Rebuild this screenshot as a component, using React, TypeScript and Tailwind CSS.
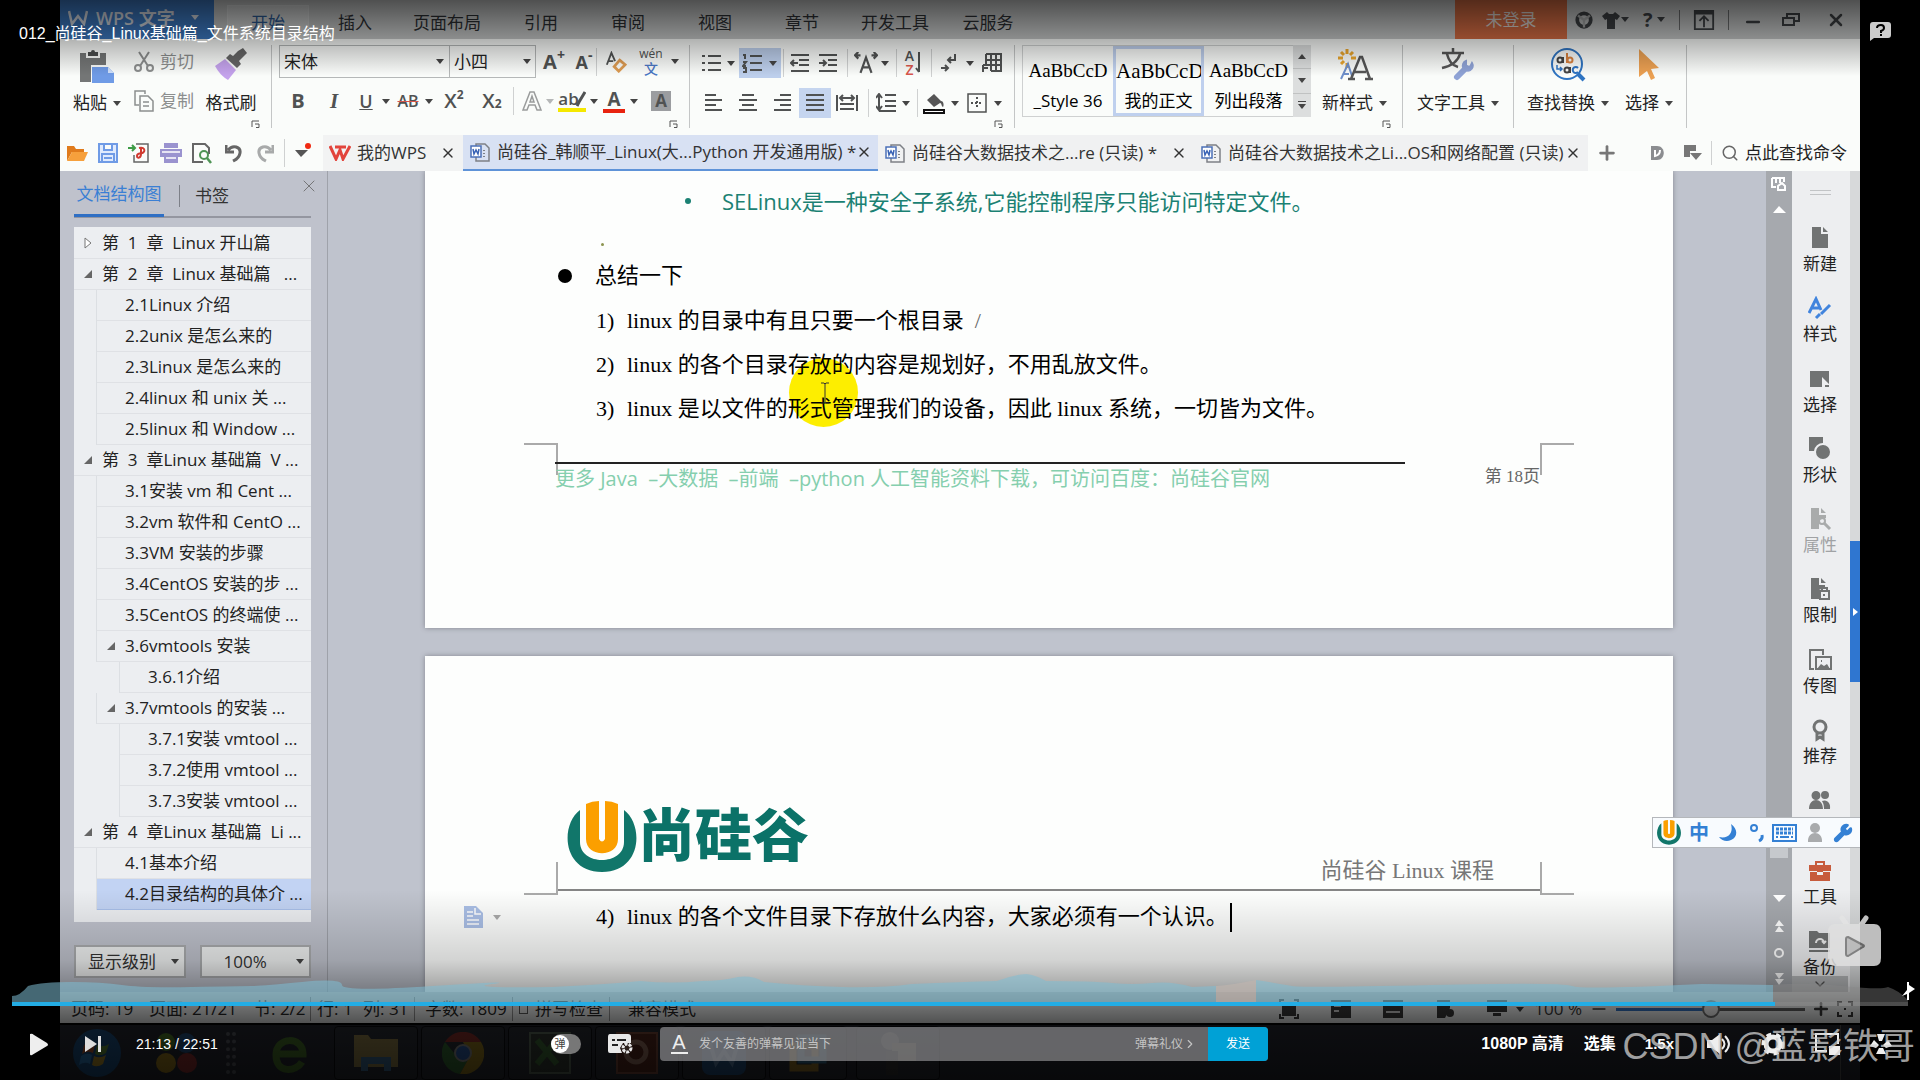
import type { ReactNode } from 'react'
import { ChevronDown, ChevronRight, Minus, Plus, Search, Wrench, X } from 'lucide-react'

const MENU = [
  { label: '插入', w: 'w-[92px]' },
  { label: '页面布局', w: 'w-[92px]' },
  { label: '引用', w: 'w-[96px]' },
  { label: '审阅', w: 'w-[78px]' },
  { label: '视图', w: 'w-[96px]' },
  { label: '章节', w: 'w-[78px]' },
  { label: '开发工具', w: 'w-[108px]' },
  { label: '云服务', w: 'w-[78px]' },
]

const OUTLINE = [
  { text: '第  1  章  Linux 开山篇', level: 1, node: 'closed' },
  { text: '第  2  章  Linux 基础篇   ...', level: 1, node: 'open' },
  { text: '2.1Linux 介绍', level: 2 },
  { text: '2.2unix 是怎么来的', level: 2 },
  { text: '2.3Linux 是怎么来的', level: 2 },
  { text: '2.4linux 和 unix 关 ...', level: 2 },
  { text: '2.5linux 和 Window ...', level: 2 },
  { text: '第  3  章Linux 基础篇  V ...', level: 1, node: 'open' },
  { text: '3.1安装 vm 和 Cent ...', level: 2 },
  { text: '3.2vm 软件和 CentO ...', level: 2 },
  { text: '3.3VM 安装的步骤', level: 2 },
  { text: '3.4CentOS 安装的步 ...', level: 2 },
  { text: '3.5CentOS 的终端使 ...', level: 2 },
  { text: '3.6vmtools 安装', level: 2, node: 'open' },
  { text: '3.6.1介绍', level: 3 },
  { text: '3.7vmtools 的安装 ...', level: 2, node: 'open' },
  { text: '3.7.1安装 vmtool ...', level: 3 },
  { text: '3.7.2使用 vmtool ...', level: 3 },
  { text: '3.7.3安装 vmtool ...', level: 3 },
  { text: '第  4  章Linux 基础篇  Li ...', level: 1, node: 'open' },
  { text: '4.1基本介绍', level: 2 },
  { text: '4.2目录结构的具体介 ...', level: 2, selected: true },
]

const LEVEL_GUIDE: Record<number, string> = { 1: 'w-0', 2: 'w-[23px] border-r', 3: 'w-[46px] border-r' }

function Caret({ className = 'text-[#444]' }: { className?: string }) {
  return (
    <svg className={`h-[5px] w-[8px] shrink-0 ${className}`} viewBox="0 0 8 5" fill="currentColor">
      <path d="M0 0h8L4 5z" />
    </svg>
  )
}

function Icon({ children, className = 'h-6 w-6', box = '0 0 24 24' }: { children: ReactNode; className?: string; box?: string }) {
  return (
    <svg className={`shrink-0 ${className}`} viewBox={box} fill="none" stroke="currentColor" strokeWidth={2}>
      {children}
    </svg>
  )
}

function Tool({ label, w, children, on = false }: { label: string; w: string; children: ReactNode; on?: boolean }) {
  return (
    <button aria-label={label} className={`flex h-[30px] shrink-0 items-center justify-center text-[#505252] ${w} ${on ? 'bg-[#c5d5ef]' : ''}`}>
      {children}
    </button>
  )
}

const Sep = ({ className = 'mx-1' }: { className?: string }) => (
  <span className={`h-[28px] w-px shrink-0 bg-[#cfd1d1] ${className}`} />
)

const GroupSep = () => <span className="mt-[6px] h-[83px] w-px shrink-0 bg-[#c4c6c6]" />

function Launcher() {
  return (
    <button aria-label="更多设置" className="absolute right-[11px] bottom-[7px]">
      <svg className="h-[8px] w-[9px] text-[#555]" viewBox="0 0 9 8" fill="none" stroke="currentColor">
        <path d="M1 7V1h7M4 4h4v3.500H5" />
      </svg>
    </button>
  )
}

function Lines({ d, className = 'h-[20px] w-[20px]' }: { d: string; className?: string }) {
  return <Icon className={className} box="0 0 20 20"><path d={d} /></Icon>
}

function TitleBar() {
  return (
    <header className="flex h-[39px] shrink-0 bg-[#c6c8c8] text-[17px] leading-[24px] text-[#2c2f33]">
      <button className="flex w-[154px] shrink-0 items-center gap-2 bg-[#3c78c0] pb-1 pl-2 text-[18px] font-semibold text-[#d5dae2]">
        <Icon className="h-[16px] w-[20px]" box="0 0 20 16"><path d="M1 1l3 13 6-8 6 8 3-13" strokeWidth={2.500} /></Icon>
        <span className="whitespace-nowrap">WPS 文字</span>
        <Caret className="ml-2 text-[#d5dae2]" />
      </button>
      <nav className="flex items-stretch pl-[13px]">
        <button className="mt-[5px] w-[82px] border border-b-0 border-[#d8dada] bg-[#d2d4d4] text-[#2b5a94]">开始</button>
        {MENU.map(m => (
          <button key={m.label} className={`shrink-0 whitespace-nowrap pt-[7px] ${m.w}`}>{m.label}</button>
        ))}
      </nav>
      <div className="ml-auto flex shrink-0 items-center text-[#3e4144]">
        <button className="h-full w-[112px] bg-[#d36b42] text-[#ded8d4]">未登录</button>
        <button aria-label="皮肤中心" className="flex w-[34px] justify-center">
          <Icon className="h-[18px] w-[18px]"><circle cx="12" cy="12" r="9" strokeWidth={5} /><path d="M4 6l8 6 8-6M12 11v11" strokeWidth={3} stroke="#a9abab" /></Icon>
        </button>
        <button aria-label="皮肤" className="flex w-[34px] items-center">
          <svg className="h-[18px] w-[20px]" viewBox="0 0 20 18" fill="currentColor"><path d="M6 1l2 2h4l2-2 5 4-3 4-2-1v10H6V8L4 9 1 5z" /></svg>
          <Caret className="text-[#3e4144]" />
        </button>
        <button aria-label="帮助" className="flex w-[38px] items-center gap-1 pl-2 text-[20px] font-bold">?<Caret className="text-[#3e4144]" /></button>
        <span className="mx-[6px] h-[20px] w-px bg-[#6d6f70]" />
        <button aria-label="功能区" className="flex w-[36px] justify-center">
          <Icon className="h-[22px] w-[24px]"><path d="M2 2h20v20H2zM12 20V9M7 13l5-5 5 5" /><path d="M2 4h20" strokeWidth={4} /></Icon>
        </button>
        <span className="mx-[6px] h-[20px] w-px bg-[#6d6f70]" />
        <button aria-label="最小化" className="flex w-[36px] justify-center pt-1"><Minus className="h-5 w-5" strokeWidth={3} /></button>
        <button aria-label="还原" className="flex w-[40px] justify-center">
          <Icon className="h-[18px] w-[18px]" box="0 0 18 18"><path d="M1 7h11v7H1zM5 6V3h12v7h-4" /></Icon>
        </button>
        <button aria-label="关闭" className="flex w-[49px] justify-center"><X className="h-5 w-5" strokeWidth={3} /></button>
      </div>
    </header>
  )
}

function BigTool({ label, className, caret = true, children }: { label: string; className: string; caret?: boolean; children: ReactNode }) {
  return (
    <button className={`mt-[9px] flex h-[67px] shrink-0 flex-col items-center justify-between whitespace-nowrap text-[#222] ${className}`}>
      {children}
      <span className="flex items-center gap-[6px]">{label}{caret && <Caret />}</span>
    </button>
  )
}

function ClipboardGroup() {
  return (
    <div className="relative flex w-[211px] shrink-0 pl-[6px]">
      <BigTool label="粘贴" className="w-[62px]">
        <svg className="h-[36px] w-[36px]" viewBox="0 0 36 36">
          <path d="M1 5h6v5h14V5h6v12H12v17H1z" fill="#747676" />
          <path d="M9 4h3a2 2 0 014 0h3v4H9z" fill="#4c4e4e" />
          <path d="M13 19h16l6 6v10H13z" fill="#6f9be6" />
          <path d="M29 19v6h6z" fill="#cfe0fb" />
        </svg>
      </BigTool>
      <div className="flex w-[70px] flex-col pt-[9px] pl-[6px] text-[#8c8e8e]">
        <button className="flex h-[28px] items-center gap-[6px] whitespace-nowrap">
          <Icon className="h-[22px] w-[20px]" box="0 0 20 22"><path d="M5 1l9 14M15 1L6 15" /><circle cx="4" cy="17" r="3" /><circle cx="16" cy="17" r="3" /></Icon>
          剪切
        </button>
        <button className="mt-[11px] flex h-[28px] items-center gap-[6px] whitespace-nowrap">
          <Icon className="h-[22px] w-[20px]" box="0 0 20 22"><path d="M5 15H1V1h10v3M6 6h8l5 5v10H6zM9 12h6M9 16h6" strokeWidth={1.500} /></Icon>
          复制
        </button>
      </div>
      <BigTool label="格式刷" className="w-[66px]" caret={false}>
        <svg className="h-[34px] w-[34px]" viewBox="0 0 34 34">
          <path d="M24 3l5-3 4 5-8 8 2 3-4 4L12 10l4-4 3 2z" fill="#666" />
          <path d="M11 11l11 11-8 10C9 29 4 24 1 18z" fill="#c4a2ec" />
        </svg>
      </BigTool>
      <Launcher />
    </div>
  )
}

function FontGroup() {
  return (
    <div className="relative flex w-[417px] shrink-0 flex-col gap-[8px] pt-[6px] pl-[7px]">
      <div className="flex h-[33px] items-center">
        <div className="relative h-[33px] w-[171px] shrink-0">
          <select aria-label="字体" className="h-full w-full appearance-none border border-[#b5b8b8] pl-1 text-[#222]"><option>宋体</option></select>
          <Caret className="pointer-events-none absolute top-[14px] right-[6px] text-[#444]" />
        </div>
        <div className="relative h-[33px] w-[86px] shrink-0">
          <select aria-label="字号" className="h-full w-full appearance-none border border-l-0 border-[#b5b8b8] pl-1 text-[#222]"><option>小四</option></select>
          <Caret className="pointer-events-none absolute top-[14px] right-[5px] text-[#444]" />
        </div>
        <Tool label="增大字号" w="w-[36px]"><span className="text-[20px] font-bold">A</span><sup className="text-[14px] font-bold">+</sup></Tool>
        <Tool label="减小字号" w="w-[24px]"><span className="text-[18px] font-bold">A</span><sup className="text-[14px] font-bold">-</sup></Tool>
        <Sep className="mx-0" />
        <Tool label="清除格式" w="w-[38px]">
          <Icon className="h-[22px] w-[22px]"><path d="M2 15L7 2l4 9M4 11h5" strokeWidth={2} /><path d="M16 10l6 5-7 7-5-5z" stroke="#dd9b52" strokeWidth={3} /></Icon>
        </Tool>
        <Tool label="拼音指南" w="w-[32px]">
          <span className="flex flex-col items-center">
            <span className="text-[12px] leading-[14px]">wén</span>
            <span className="text-[14px] leading-[15px] font-medium text-[#4a77c4]">文</span>
          </span>
        </Tool>
        <Caret className="ml-[4px] text-[#444]" />
      </div>
      <div className="flex h-[30px] items-center">
        <Tool label="加粗" w="w-[38px]"><b className="text-[20px]">B</b></Tool>
        <Tool label="倾斜" w="w-[34px]"><i className="font-['Liberation_Serif'] text-[21px] font-bold">I</i></Tool>
        <Tool label="下划线" w="w-[30px]"><u className="text-[18px] font-semibold">U</u></Tool>
        <Caret className="mx-px text-[#444]" />
        <Tool label="删除线" w="w-[34px]"><s className="text-[16px] font-semibold decoration-[#d9564c]">AB</s></Tool>
        <Caret />
        <Tool label="上标" w="w-[42px]"><span className="text-[20px] font-semibold">X</span><sup className="text-[12px] font-bold">2</sup></Tool>
        <Tool label="下标" w="w-[34px]"><span className="text-[20px] font-semibold">X</span><sub className="text-[12px] font-bold">2</sub></Tool>
        <Sep className="mr-1 ml-[4px]" />
        <Tool label="文字效果" w="w-[28px]">
          <Icon className="h-[20px] w-[20px] text-[#9a9c9c]" box="0 0 20 20"><path d="M1 19L8 1h4l7 18h-4l-2-5H7l-2 5zM8 11h4l-2-6z" strokeWidth={1.500} /></Icon>
        </Tool>
        <Caret className="text-[#b5b7b7]" />
        <Tool label="突出显示" w="w-[36px]">
          <span className="flex items-center border-b-[4px] border-[#f5e800] text-[17px] leading-[18px] font-semibold">
            ab<Icon className="-ml-[3px] h-[16px] w-[10px]" box="0 0 10 16"><path d="M9 1L3 11l-2 4" strokeWidth={3} /></Icon>
          </span>
        </Tool>
        <Caret />
        <Tool label="字体颜色" w="w-[32px]"><span className="border-b-[4px] border-[#e8230f] px-1 text-[19px] leading-[19px] font-bold">A</span></Tool>
        <Caret />
        <Tool label="字符底纹" w="w-[46px]"><span className="w-[20px] bg-[#9b9da0] text-center text-[17px] leading-[20px] font-bold">A</span></Tool>
      </div>
      <Launcher />
    </div>
  )
}

function ParagraphGroup() {
  return (
    <div className="relative flex w-[324px] shrink-0 flex-col gap-[10px] pt-[9px] pl-[7px]">
      <div className="flex h-[30px] items-center">
        <Tool label="项目符号" w="w-[28px]"><Lines d="M7 3h13M7 10h13M7 17h13M1 3h3M1 10h3M1 17h3" /></Tool>
        <Caret className="ml-[2px] text-[#444]" />
        <button aria-label="编号" className="ml-[4px] flex h-[30px] w-[42px] shrink-0 items-center gap-[7px] bg-[#bdcfec] pl-[3px] text-[#505252]">
          <Lines d="M8 3h12M8 10h12M8 17h12M1 2h2v4M1 9h3l-3 4h3M1 15h3v4H1" />
          <Caret />
        </button>
        <Sep className="mx-[2px]" />
        <Tool label="减少缩进" w="w-[28px]"><Lines d="M1 2h18M9 7h10M9 12h10M1 18h18M8 10H1M4 7l-3 3 3 3" /></Tool>
        <Tool label="增加缩进" w="w-[28px]"><Lines d="M1 2h18M10 7h9M10 12h9M1 18h18M1 10h7M5 7l3 3-3 3" /></Tool>
        <Sep className="mx-[5px]" />
        <Tool label="字符缩放" w="w-[26px]"><Lines className="h-[22px] w-[24px]" d="M5 19l5-14 5 14M7 14h6M5 3H0M3 0L0 3l3 3M15 3h5M17 0l3 3-3 3" /></Tool>
        <Caret className="mx-[2px] text-[#444]" />
        <Sep className="mr-[3px] ml-[5px]" />
        <Tool label="排序" w="w-[28px]">
          <span className="flex flex-col text-[14px] leading-[14px] font-semibold"><span>A</span><span className="text-[#d9564c]">Z</span></span>
          <Icon className="h-[22px] w-[9px]" box="0 0 9 22"><path d="M5 0v20M2 16l3 4" /></Icon>
        </Tool>
        <Sep className="mx-[3px]" />
        <Tool label="换行标记" w="w-[28px]"><Lines d="M16 1v6H9M12 4L9 7l3 3M2 15h7M6 12l3 3-3 3" /></Tool>
        <Caret className="mx-[3px] text-[#444]" />
        <Tool label="插入表格" w="w-[30px]"><Lines d="M4 1h15v17H9M4 1v10M4 7h15M4 12h15M9 1v17M14 1v17M1 12v7M1 12h6M1 15h5" /></Tool>
      </div>
      <div className="flex h-[30px] items-center">
        <Tool label="左对齐" w="w-[34px]"><Lines d="M1 2h11M1 7h17M1 12h11M1 17h17" /></Tool>
        <Tool label="居中" w="w-[34px]"><Lines d="M4 2h12M1 7h18M4 12h12M1 17h18" /></Tool>
        <Tool label="右对齐" w="w-[34px]"><Lines d="M8 2h11M2 7h17M8 12h11M2 17h17" /></Tool>
        <Tool label="两端对齐" w="w-[32px]" on><Lines d="M1 2h18M1 7h18M1 12h18M1 17h18" /></Tool>
        <Tool label="分散对齐" w="w-[32px]"><Lines className="h-[20px] w-[22px]" d="M0 2v16M20 2v16M3 5h14M6 2L3 5l3 3M14 2l3 3-3 3M3 11h14M3 16h14" /></Tool>
        <Sep className="mx-[5px]" />
        <Tool label="行距" w="w-[24px]"><Lines d="M9 2h11M9 8h11M9 13h11M3 18h17M3 1v16M0 5l3-4 3 4M0 13l3 4 3-4" /></Tool>
        <Caret className="mx-[4px] text-[#444]" />
        <Sep className="mx-[3px]" />
        <Tool label="底纹" w="w-[26px]">
          <svg className="h-[22px] w-[22px]" viewBox="0 0 22 22"><path d="M4 8l7-6 7 7c3 0 3 5 2 6-2-1-1-4-3-4l-6 4z" fill="#555" /><path d="M1 18h20v3H1z" fill="#fff" stroke="#111" strokeWidth="2" /></svg>
        </Tool>
        <Caret className="mx-[4px] text-[#444]" />
        <Tool label="边框" w="w-[28px]">
          <Icon className="h-[20px] w-[20px]" box="0 0 20 20"><path d="M1 1h18v18H1z" strokeWidth={1.500} /><path d="M10 4v12M4 10h12" strokeDasharray="2 2" /></Icon>
        </Tool>
        <Caret className="ml-[3px] text-[#444]" />
      </div>
      <Launcher />
    </div>
  )
}

function StyleGroup() {
  return (
    <div className="relative flex w-[387px] shrink-0 pt-[6px] pl-[7px]">
      <div className="flex h-[72px] w-[271px] shrink-0 border border-r-0 border-[#cfd1d1] text-[17px]">
        <button className="flex w-[90px] shrink-0 flex-col items-center justify-end overflow-hidden whitespace-nowrap pb-[3px]">
          <span className="font-['Liberation_Serif'] text-[19px] leading-[24px] text-black">AaBbCcD</span>
          <span className="mt-[6px] leading-[24px]">_Style 36</span>
        </button>
        <button className="flex w-[91px] shrink-0 flex-col items-center justify-end overflow-hidden border-[3px] border-[#bfd0ee] whitespace-nowrap">
          <span className="w-full overflow-hidden text-left font-['Liberation_Serif'] text-[21px] leading-[24px] text-black">AaBbCcD</span>
          <span className="mt-[6px] leading-[24px]">我的正文</span>
        </button>
        <button className="flex w-[89px] shrink-0 flex-col items-center justify-end overflow-hidden whitespace-nowrap pb-[3px]">
          <span className="font-['Liberation_Serif'] text-[19px] leading-[24px] text-black">AaBbCcD</span>
          <span className="mt-[6px] leading-[24px]">列出段落</span>
        </button>
      </div>
      <div className="flex h-[72px] w-[18px] shrink-0 flex-col divide-y divide-[#c0c2c2] bg-[#dcdede]">
        <button aria-label="向上" className="flex flex-1 items-center justify-center"><Caret className="rotate-180 text-[#444]" /></button>
        <button aria-label="向下" className="flex flex-1 items-center justify-center"><Caret /></button>
        <button aria-label="更多样式" className="flex flex-1 flex-col items-center justify-center gap-[2px]"><span className="h-px w-2 bg-[#444]" /><Caret /></button>
      </div>
      <button className="mt-[3px] ml-[11px] flex h-[67px] flex-col items-center justify-between whitespace-nowrap text-[#222]">
        <svg className="h-[34px] w-[36px]" viewBox="0 0 36 34" fill="none">
          <path d="M10 1v5M10 15v5M1 10h5M14 10h5M4 4l3 3M16 4l-3 3M4 16l3-3" stroke="#eaa52c" strokeWidth="3" />
          <path d="M4 31l7-15 4 12M6 26h6" stroke="#6e8fca" strokeWidth="2" />
          <path d="M14 31l9-22h2l8 22M17 24h12M11 31h7M28 31h8" stroke="#555" strokeWidth="2.500" />
        </svg>
        <span className="flex items-center gap-[6px]">新样式<Caret /></span>
      </button>
      <Launcher />
    </div>
  )
}

function Ribbon() {
  return (
    <section className="flex h-[96px] shrink-0 bg-[#fafcfa] text-[17px] leading-[24px]">
      <ClipboardGroup />
      <GroupSep />
      <FontGroup />
      <GroupSep />
      <ParagraphGroup />
      <GroupSep />
      <StyleGroup />
      <GroupSep />
      <BigTool label="文字工具" className="w-[110px]">
        <svg className="h-[34px] w-[34px]" viewBox="0 0 34 34" fill="none">
          <path d="M1 5h22M12 0v5M6 6c2 8 7 12 11 13M19 6C17 13 10 18 1 20" stroke="#555" strokeWidth="2.500" />
          <path d="M16 29l9-9" stroke="#8fa3d6" strokeWidth="6" strokeLinecap="round" />
          <path d="M31 15a5 5 0 11-6-2v5l4 1z" fill="#8fa3d6" stroke="#8fa3d6" strokeWidth="2" />
        </svg>
      </BigTool>
      <GroupSep />
      <BigTool label="查找替换" className="w-[108px]">
        <svg className="h-[34px] w-[36px]" viewBox="0 0 36 34" fill="none">
          <circle cx="17" cy="16" r="15" stroke="#2f74c2" strokeWidth="2" />
          <path d="M28 26l6 6" stroke="#2f74c2" strokeWidth="4" />
          <circle cx="10" cy="12" r="2.500" stroke="#444" strokeWidth="2" /><path d="M13 9v6" stroke="#444" strokeWidth="2" />
          <path d="M17 5v10" stroke="#d9823f" strokeWidth="2" /><circle cx="20" cy="12" r="2.500" stroke="#d9823f" strokeWidth="2" />
          <circle cx="17" cy="22" r="2.500" stroke="#444" strokeWidth="2" /><path d="M20 19v6" stroke="#444" strokeWidth="2" />
          <path d="M28 20a3 3 0 100 4" stroke="#2f74c2" strokeWidth="2" />
          <path d="M7 17v4h5M10 19l2 2-2 2" stroke="#2f74c2" strokeWidth="1.500" />
        </svg>
      </BigTool>
      <BigTool label="选择" className="w-[54px]">
        <svg className="h-[32px] w-[22px]" viewBox="0 0 22 32" fill="#eba052"><path d="M1 1l20 19-8 1 4 9-4 2-4-9-8 6z" /></svg>
      </BigTool>
      <span className="w-[10px]" />
      <GroupSep />
    </section>
  )
}

function DocIcon() {
  return (
    <svg className="h-[20px] w-[20px] shrink-0" viewBox="0 0 20 20" fill="none">
      <path d="M6 2h9l4 4v13H6z" stroke="#7d8086" strokeWidth="1.500" />
      <path d="M14 8v9" stroke="#7d8086" strokeDasharray="1 2" strokeWidth="2" />
      <path d="M1 4h10v11H1z" fill="#fff" stroke="#4b70b8" strokeWidth="1.500" />
      <path d="M3 7l1 5 2-4 2 4 1-5" stroke="#3963b5" strokeWidth="1.500" />
    </svg>
  )
}

function CloseTab() {
  return <button aria-label="关闭" className="mr-[7px] text-[#333]"><X className="h-4 w-4" strokeWidth={2} /></button>
}

function TabBar() {
  return (
    <div className="flex h-[36px] shrink-0 bg-[#fafcfa] text-[17px] leading-[24px] text-[#333]">
      <div className="flex w-[263px] shrink-0 items-center gap-[10px] pl-[6px]">
        <button aria-label="打开"><svg className="h-[18px] w-[22px]" viewBox="0 0 22 18"><path d="M1 17V2h7l2 3h8v3H6z" fill="#e07b1c" /><path d="M6 8h16l-4 9H1z" fill="#f6a03c" /></svg></button>
        <button aria-label="保存"><svg className="h-[20px] w-[20px]" viewBox="0 0 20 20" fill="#dfeafd" stroke="#6f9be6" strokeWidth="2"><path d="M1 1h18v18H1zM6 1v6h8V1M4 19v-8h12v8M6 15h8" /></svg></button>
        <button aria-label="输出PDF"><svg className="h-[20px] w-[22px]" viewBox="0 0 22 20" fill="none" strokeWidth="1.500"><path d="M8 1h12v18H6v-7" stroke="#666" /><path d="M0 5h7M4 2l3 3-3 3" stroke="#3e9c46" strokeWidth="2" /><path d="M11 5c7-2 7 6 1 5M13 5v6c0 4-4 5-4 2s3-2 4-3" stroke="#d13a30" strokeWidth="2" /></svg></button>
        <button aria-label="打印"><svg className="h-[20px] w-[22px]" viewBox="0 0 22 20" fill="#9a93cf"><path d="M4 0h14v5H4zM0 6h22v8H0zM4 12h14v8H4z" /><path d="M2 9h18M6 15h10" stroke="#fff" strokeWidth="1.500" /></svg></button>
        <button aria-label="打印预览"><svg className="h-[21px] w-[20px]" viewBox="0 0 20 21" fill="none" strokeWidth="1.500"><path d="M11 19H1V1h12l4 4v6" stroke="#666" strokeWidth="2" /><circle cx="12" cy="12" r="4" stroke="#4f9455" strokeWidth="2" /><path d="M15 15l4 5" stroke="#4f9455" strokeWidth="2.500" /></svg></button>
        <button aria-label="撤销" className="ml-[3px]"><Icon className="h-[20px] w-[18px] text-[#666]" box="0 0 18 20"><path d="M3 7c5-6 13-3 12 3s-5 7-7 8M1 2v7h8" strokeWidth={3} /></Icon></button>
        <button aria-label="恢复" className="ml-[3px]"><Icon className="h-[20px] w-[18px] text-[#a8aaaa]" box="0 0 18 20"><path d="M15 7C10 1 2 4 3 10s5 7 7 8M17 2v7H9" strokeWidth={3} /></Icon></button>
        <span className="h-[28px] w-px bg-[#cfd1d1]" />
        <button aria-label="自定义" className="relative flex h-5 w-4 items-center">
          <svg className="h-[7px] w-[13px] text-[#555]" viewBox="0 0 13 7" fill="currentColor"><path d="M0 0h13L6 7z" /></svg>
          <span className="absolute top-0 right-0 h-[6px] w-[6px] rounded-full bg-[#f02a12]" />
        </button>
      </div>
      <div className="flex w-[140px] shrink-0 items-center bg-[#f2f3f3] pl-[6px]">
        <svg className="h-[16px] w-[22px]" viewBox="0 0 22 16" fill="none" stroke="#e2443c" strokeWidth="3"><path d="M1 1l6 13 4-9 3 9L21 1M6 2h11" /></svg>
        <a href="#wps" className="ml-[6px] flex-1">我的WPS</a>
        <CloseTab />
      </div>
      <div className="flex w-[415px] shrink-0 items-center border-b-2 border-[#5f93d8] bg-[#d8e1f3] pl-[7px]">
        <DocIcon />
        <a href="#linux" className="ml-[7px] flex-1 whitespace-nowrap">尚硅谷_韩顺平_Linux(大...Python 开发通用版) *</a>
        <CloseTab />
      </div>
      <div className="flex w-[316px] shrink-0 items-center bg-[#f0f1f2] pl-[7px]">
        <DocIcon />
        <a href="#bigdata" className="ml-[7px] flex-1 whitespace-nowrap">尚硅谷大数据技术之...re (只读) *</a>
        <CloseTab />
      </div>
      <div className="flex w-[394px] shrink-0 items-center bg-[#f0f1f2] pl-[7px]">
        <DocIcon />
        <a href="#network" className="ml-[7px] flex-1 whitespace-nowrap">尚硅谷大数据技术之Li...OS和网络配置 (只读)</a>
        <CloseTab />
      </div>
      <button aria-label="新建标签" className="ml-[8px] text-[#777]"><Plus className="h-[22px] w-[22px]" strokeWidth={3} /></button>
      <div className="ml-auto flex shrink-0 items-center pr-[11px]">
        <svg className="h-[14px] w-[14px]" viewBox="0 0 14 14"><path d="M1 0h6c9 0 9 14 0 14H1z" fill="#8b8d90" /><path d="M5 4v6q5-1 5-6" stroke="#fff" strokeWidth="2" fill="none" /></svg>
        <svg className="ml-[20px] h-[16px] w-[18px]" viewBox="0 0 18 16" fill="#777"><path d="M0 0h12v6H6v6H0zM6 8h12l-6 7z" /></svg>
        <span className="mx-[9px] h-[24px] w-px bg-[#cfd1d1]" />
        <label className="flex items-center gap-[6px]">
          <Search className="h-[18px] w-[18px] text-[#666]" />
          <input aria-label="查找命令" placeholder="点此查找命令" className="w-[104px] bg-transparent outline-none placeholder:text-[#222] placeholder:opacity-100" />
        </label>
      </div>
    </div>
  )
}

function OutlinePanel() {
  return (
    <aside className="flex w-[268px] shrink-0 flex-col border-r border-[#9fa2aa] pr-[16px] pl-[14px] text-[17px] leading-[24px]">
      <div className="relative flex h-[47px] shrink-0 items-center border-b-2 border-[#9496a0] pt-[4px] text-[#333]">
        <button className="h-[43px] w-[90px] shrink-0 border-b-[3px] border-[#2f6fc4] text-[#3a7fd4]">文档结构图</button>
        <span className="mx-[15px] h-[22px] w-px bg-[#7d8088]" />
        <button>书签</button>
        <button aria-label="关闭面板" className="absolute top-[5px] right-[-8px]"><X className="h-[20px] w-[20px] text-[#666]" strokeWidth={1} /></button>
      </div>
      <ul className="mt-[9px] flex min-h-0 flex-1 flex-col overflow-hidden bg-[#eceef1] pt-px text-[#222]">
        {OUTLINE.map(item => (
          <li key={item.text} className="flex h-[31px] shrink-0">
            <span className={`shrink-0 border-[#dcdfe3] ${LEVEL_GUIDE[item.level]}`} />
            <a href="#outline" className={`flex min-w-0 flex-1 items-center whitespace-pre border-b ${item.selected ? 'border-[#a9c0ea] bg-[#c2d3f3]' : 'border-[#dfe1e5]'}`}>
              <span className="flex w-[28px] shrink-0 justify-center">
                {item.node === 'open' && <svg className="h-[8px] w-[8px]" viewBox="0 0 8 8" fill="#666"><path d="M8 0v8H0z" /></svg>}
                {item.node === 'closed' && <svg className="h-[12px] w-[8px]" viewBox="0 0 8 12" fill="#fff" stroke="#777"><path d="M1 1l6 5-6 5z" /></svg>}
              </span>
              {item.text}
            </a>
          </li>
        ))}
      </ul>
      <div className="flex h-[70px] shrink-0 gap-[14px] pt-[23px]">
        <div className="relative h-[33px] flex-1">
          <select aria-label="显示级别" className="h-full w-full appearance-none border-2 border-[#a9abad] bg-[#eef0f0] pl-[12px] text-[#333]"><option>显示级别</option></select>
          <Caret className="pointer-events-none absolute top-[14px] right-[7px] text-[#444]" />
        </div>
        <div className="relative h-[33px] flex-1">
          <select aria-label="缩放" className="h-full w-full appearance-none border-2 border-[#a9abad] bg-[#eef0f0] pl-[22px] text-[#333]"><option>100%</option></select>
          <Caret className="pointer-events-none absolute top-[14px] right-[7px] text-[#444]" />
        </div>
      </div>
    </aside>
  )
}

function Item({ n, children }: { n: number; children: ReactNode }) {
  return (
    <p className="flex h-[44px] items-center whitespace-nowrap">
      <span className="w-[31px]">{n})</span>
      <span>{children}</span>
    </p>
  )
}

function AtguiguMark({ className }: { className: string }) {
  return (
    <svg className={className} viewBox="0 0 72 72">
      <path d="M14 9C-6 24-4 71 36 71s42-47 22-62v32c0 24-44 24-44 0z" fill="#11766a" />
      <path d="M20 3q6-3 13-3v38q3 5 6 0V0q7 0 13 3v35c0 19-32 19-32 0z" fill="#fb9f00" />
    </svg>
  )
}

function Document() {
  return (
    <main className="flex min-w-0 flex-1 flex-col overflow-hidden bg-[#bfc3cd] pr-[93px] pl-[97px]">
      <article className="relative isolate shrink-0 bg-[#fdfefd] pb-[137px] font-['Liberation_Serif','Noto_Sans_CJK_SC',serif] text-[22px] leading-[24px] text-black shadow-[0_0_5px_#84868e]">
        <span className="absolute top-[187px] left-[364px] -z-10 h-[69px] w-[69px] rounded-full bg-[#fdee00]" />
        <svg className="absolute top-[211px] left-[394px] h-[22px] w-[12px]" viewBox="0 0 12 22" fill="none" stroke="#333"><path d="M2 1h3l1 1 1-1h3M6 2v18M2 21h3l1-1 1 1h3" /></svg>
        <p className="flex h-[53px] items-center pt-[6px] pl-[260px] font-['Open_Sans','Noto_Sans_CJK_SC',sans-serif] whitespace-nowrap text-[#1b8173]">
          <span className="mr-[31px] h-[6px] w-[6px] rounded-full bg-[#1b8173]" />
          SELinux是一种安全子系统,它能控制程序只能访问特定文件。
        </p>
        <div className="flex h-[40px] items-center pl-[176px]"><span className="h-[3px] w-[3px] rounded-full bg-[#8c9450]" /></div>
        <div className="pl-[171px]">
          <p className="-ml-[38px] flex h-[24px] items-center">
            <span className="mr-[23px] h-[14px] w-[14px] rounded-full bg-black" />总结一下
          </p>
          <div className="mt-[11px]">
            <Item n={1}>linux 的目录中有且只要一个根目录 <span className="text-[#666]">&nbsp;/</span></Item>
            <Item n={2}>linux 的各个目录存放的内容是规划好，不用乱放文件。</Item>
            <Item n={3}>linux 是以文件的形式管理我们的设备，因此 linux 系统，一切皆为文件。</Item>
          </div>
        </div>
        <footer className="mt-[12px] flex items-start px-[99px]">
          <span className="h-[32px] w-[34px] shrink-0 border-t-2 border-r-2 border-[#aaa]" />
          <div className="flex min-w-0 flex-1 justify-between pt-[19px]">
            <p className="-ml-[3px] w-[850px] border-t-2 border-[#222] pt-[2px] font-['Open_Sans','Noto_Sans_CJK_SC',sans-serif] text-[20px] leading-[25px] whitespace-pre text-[#85cfae]">
              更多 Java  –大数据  –前端  –python 人工智能资料下载，可访问百度：尚硅谷官网
            </p>
            <p className="pt-[2px] text-[17px] leading-[25px] whitespace-nowrap text-[#666]">第 18页</p>
          </div>
          <span className="h-[32px] w-[34px] shrink-0 border-t-2 border-l-2 border-[#aaa]" />
        </footer>
      </article>

      <article className="mt-[28px] min-h-0 flex-1 bg-[#fdfefd] pt-[145px] font-['Liberation_Serif','Noto_Sans_CJK_SC',serif] text-[22px] leading-[24px] text-black shadow-[0_0_5px_#84868e]">
        <header className="flex h-[94px] items-end px-[99px]">
          <span className="h-[33px] w-[34px] shrink-0 border-r-2 border-b-2 border-[#aaa]" />
          <div className="mb-[4px] flex h-[90px] flex-1 justify-between border-b-2 border-[#858585] pr-[46px] pl-[8px]">
            <div className="flex h-[72px] items-center">
              <AtguiguMark className="h-[72px] w-[72px]" />
              <span className="text-[57px] leading-[60px] font-black text-[#0b7268]">尚硅谷</span>
            </div>
            <p className="mt-auto pb-[6px] text-[#777]">尚硅谷 Linux 课程</p>
          </div>
          <span className="h-[33px] w-[34px] shrink-0 border-b-2 border-l-2 border-[#aaa]" />
        </header>
        <div className="flex items-center">
          <button aria-label="段落布局" className="flex w-[171px] items-center gap-[10px] pl-[39px]">
            <svg className="h-[22px] w-[19px]" viewBox="0 0 19 22"><path d="M0 0h12l7 7v15H0z" fill="#aabfe6" /><path d="M3 6h6M3 10h6M3 14h12M3 18h12M11 2v6h6" stroke="#fff" strokeWidth="1.500" fill="none" /></svg>
            <Caret className="text-[#aaa]" />
          </button>
          <Item n={4}>linux 的各个文件目录下存放什么内容，大家必须有一个认识。</Item>
          <span className="ml-[2px] h-[29px] w-[2px] bg-black" />
        </div>
      </article>
    </main>
  )
}

function ScrollRail() {
  return (
    <div className="flex w-[26px] shrink-0 flex-col items-center bg-[#a6a9ae] pt-[6px] pb-[7px] text-white">
      <Icon className="h-[15px] w-[16px]" box="0 0 16 15"><path d="M1 1h12v4M1 1v9h4M5 2v4M9 2v4M7 13V9l4-3 3 3v4z" /></Icon>
      <svg className="mt-[14px] h-[7px] w-[13px]" viewBox="0 0 13 7" fill="currentColor"><path d="M6 0l7 7H0z" /></svg>
      <span className="mt-auto h-[40px] w-[18px] bg-[#c6c9cd]" />
      <svg className="mt-[37px] h-[7px] w-[13px]" viewBox="0 0 13 7" fill="currentColor"><path d="M0 0h13L6 7z" /></svg>
      <svg className="mt-[18px] h-[12px] w-[11px]" viewBox="0 0 11 12" fill="currentColor"><path d="M5 0l5 6H1zM5 6l5 6H1z" /></svg>
      <span className="mt-[16px] h-[10px] w-[10px] rounded-full border-2 border-white" />
      <svg className="mt-[15px] h-[12px] w-[11px]" viewBox="0 0 11 12" fill="currentColor"><path d="M1 0h9L5 6zM1 6h9l-5 6z" /></svg>
    </div>
  )
}

const SIDE_TOOLS = [
  { label: '新建', color: 'text-[#717373]', icon: <path d="M4 1h9v7h7v14H4zM15 1l5 5h-5z" fill="currentColor" stroke="none" /> },
  { label: '样式', color: 'text-[#4184dd]', icon: <path d="M1 17L8 3l5 11M4 12h7M22 9l-9 9M12 18l-4 4" strokeWidth={3} /> },
  { label: '选择', color: 'text-[#717373]', icon: <path d="M2 4h19v13l-7-7v10H2zM17 18h4v2h-4z" fill="currentColor" stroke="none" /> },
  { label: '形状', color: 'text-[#717373]', icon: <path d="M1 0h14v6a9 9 0 00-9 8H1zM15 8a7 7 0 110 14 7 7 0 010-14z" fill="currentColor" stroke="none" /> },
  { label: '属性', color: 'text-[#a9abab]', disabled: true, icon: <><path d="M3 1h8v7h7v3l-7 2v9H3zM13 1l5 5h-5z" fill="currentColor" stroke="none" /><circle cx="14" cy="14" r="3" /><path d="M16 16l6 6" strokeWidth={3} /></> },
  { label: '限制', color: 'text-[#717373]', icon: <><path d="M3 1h8v7h6v2l-6 3v9H3zM13 1l5 5h-5z" fill="currentColor" stroke="none" /><path d="M12 14h9v8h-9zM14 14v-3h5v3M16 17v2" /></> },
  { label: '传图', color: 'text-[#717373]', icon: <><path d="M2 21V2h13v5M2 18v3h4" /><path d="M8 9h15v12H8zM13 13h1" /><path d="M9 21l4-5 3 2 3-2 3 5z" fill="currentColor" stroke="none" /></> },
  { label: '推荐', color: 'text-[#717373]', icon: <path d="M12 3a6 6 0 110 12 6 6 0 010-12zM9 14v7l3-2 3 2v-7" strokeWidth={3} /> },
  { label: '分享', color: 'text-[#717373]', icon: <path d="M8 3a4 4 0 110 9 4 4 0 010-9zM17 3a4 4 0 110 8 4 4 0 010-8zM1 21c0-12 14-12 14 0zM16 21c0-5-1-6-2-8 5-2 9 2 8 8z" fill="currentColor" stroke="none" /> },
  { label: '工具', color: 'text-[#c75b3c]', icon: <><path d="M1 6h22v6H1zM2 13h7v3h6v-3h7v9H2z" fill="currentColor" stroke="none" /><path d="M8 6V3h8v3M9 12h6" /></> },
  { label: '备份', color: 'text-[#717373]', icon: <><path d="M1 2h8l2 2h11v15H1z" fill="currentColor" stroke="none" /><path d="M8 14a4 4 0 118 0M14 12l2 2 2-2" stroke="#eee" /><path d="M1 22h21" /></> },
]

function TaskPane() {
  return (
    <aside className="flex w-[68px] shrink-0 bg-[#d7d9da]">
      <div className="flex w-[58px] flex-col items-center bg-[#edeef0] pr-[2px]">
        <span className="mt-[19px] h-[5px] w-[21px] shrink-0 border-y border-[#c2c4c6]" />
        <div className="mt-[31px] flex min-h-0 flex-1 flex-col justify-between">
          {SIDE_TOOLS.map(t => (
            <button
              key={t.label}
              disabled={t.disabled}
              className={`flex h-[50px] flex-col items-center justify-between text-[17px] leading-[24px] ${t.disabled ? 'text-[#a0a2a4]' : 'text-[#222]'}`}
            >
              <Icon className={`h-[24px] w-[24px] ${t.color}`}>{t.icon}</Icon>
              {t.label}
            </button>
          ))}
        </div>
        <button aria-label="更多" className="-mt-[3px] flex h-[16px] w-full shrink-0 items-center justify-center bg-[#b9bbbd]"><ChevronDown className="h-4 w-4 text-[#555]" /></button>
      </div>
      <button aria-label="收起" className="mt-[370px] flex h-[141px] w-[10px] items-center justify-center bg-[#2f76d0]">
        <svg className="h-[8px] w-[5px]" viewBox="0 0 5 8" fill="#fff"><path d="M0 0l5 4-5 4z" /></svg>
      </button>
    </aside>
  )
}

function StatusBar() {
  return (
    <div className="flex h-[31px] shrink-0 items-center overflow-hidden bg-[#d9dbdb] pt-[3px] pl-[11px] text-[17px] leading-[24px] whitespace-nowrap text-[#222]">
      <span className="w-[78px]">页码: 19</span>
      <span className="w-[105px]">页面: 21/21</span>
      <span className="w-[57px] border-r border-[#888]">节: 2/2</span>
      <span className="ml-[6px] w-[46px]">行: 1</span>
      <span className="w-[52px] border-r border-[#888]">列: 31</span>
      <span className="ml-[10px] w-[88px] border-r border-[#888]">字数: 1809</span>
      <label className="ml-[6px] flex items-center gap-[7px] border-r border-[#888] pr-[6px]">
        <input type="checkbox" className="h-[9px] w-[9px] appearance-none border border-[#555]" />拼写检查
      </label>
      <span className="ml-[18px]">兼容模式</span>
      <div className="ml-auto flex items-center gap-[32px] pr-[7px] text-[#333]">
        <Icon className="h-[20px] w-[20px]" box="0 0 20 20"><path d="M1 5V1h4M15 1h4v4M19 15v4h-4M5 19H1v-4" /><path d="M4 4h12v12H4z" fill="currentColor" /></Icon>
        <svg className="h-[18px] w-[20px]" viewBox="0 0 20 18" fill="currentColor"><path d="M0 0h20v18H0z" /><path d="M3 6h7M3 11h5" stroke="#bbb" strokeWidth="2" /></svg>
        <svg className="h-[18px] w-[20px]" viewBox="0 0 20 18" fill="currentColor"><path d="M0 0h20v18H0z" /><path d="M3 5h14M3 12h14" stroke="#bbb" strokeWidth="2" /></svg>
        <svg className="h-[18px] w-[20px]" viewBox="0 0 20 18" fill="currentColor"><path d="M2 0h13v8l-5 10H2z" /><circle cx="15" cy="13" r="4" /></svg>
        <div className="flex items-center">
          <svg className="h-[18px] w-[20px]" viewBox="0 0 20 18" fill="currentColor"><path d="M0 0h20v12H0zM6 13h8v3H6z" /></svg>
          <Caret className="ml-[9px] text-[#333]" />
          <span className="ml-[10px]">100 %</span>
          <Minus className="mx-[7px] h-5 w-5" />
          <input
            type="range"
            aria-label="显示比例"
            defaultValue={50}
            className="h-[3px] w-[189px] appearance-none bg-[linear-gradient(to_right,#2d66ad_50%,#555_50%)] [&::-webkit-slider-thumb]:h-[18px] [&::-webkit-slider-thumb]:w-[18px] [&::-webkit-slider-thumb]:appearance-none [&::-webkit-slider-thumb]:rounded-full [&::-webkit-slider-thumb]:border-2 [&::-webkit-slider-thumb]:border-[#666] [&::-webkit-slider-thumb]:bg-[#ddd]"
          />
          <Plus className="mx-[6px] h-5 w-5" strokeWidth={3} />
          <Icon className="h-[16px] w-[16px]" box="0 0 16 16"><path d="M1 5V1h4M11 1h4v4M15 11v4h-4M5 15H1v-4M7 8h2" /></Icon>
        </div>
      </div>
    </div>
  )
}

function TaskButton({ className = 'w-[84px]', children }: { className?: string; children: ReactNode }) {
  return <button className={`flex h-[54px] shrink-0 items-center justify-center rounded-sm border border-[#0c0d10] bg-[#2b2e36] ${className}`}>{children}</button>
}

function Taskbar() {
  return (
    <div className="flex h-[57px] shrink-0 items-center gap-[3px] border-t-2 border-black bg-[#262931] pl-[12px] opacity-90">
      <svg className="h-[50px] w-[50px]" viewBox="0 0 50 50">
        <circle cx="25" cy="25" r="24" fill="#1c4f80" />
        <path d="M12 17q6-4 11-1l-2 9q-6-3-11 1z" fill="#b0562d" /><path d="M25 17q6 3 12-1l-3 9q-6 4-11 1z" fill="#5f8a36" />
        <path d="M9 28q6-4 11-1l-2 9q-5-3-11 1z" fill="#2d7ab8" /><path d="M22 28q6 3 12-1l-3 9q-6 4-11 1z" fill="#b08e2a" />
      </svg>
      <svg className="ml-[30px] h-[42px] w-[44px]" viewBox="0 0 44 42"><circle cx="11" cy="10" r="9" fill="#4f7a28" /><circle cx="31" cy="11" r="10" fill="#24507f" /><circle cx="11" cy="31" r="10" fill="#9a7a1e" /><circle cx="32" cy="31" r="10" fill="#8c3030" /></svg>
      <span className="ml-[24px] h-[42px] w-[10px] border-x-4 border-dotted border-[#555860]" />
      <svg className="mr-[22px] ml-[30px] h-[42px] w-[40px]" viewBox="0 0 40 42" fill="none" stroke="#46702a" strokeWidth="7"><path d="M7 22h27c0-18-27-18-27 1s20 17 26 7" /></svg>
      <TaskButton><svg className="h-[40px] w-[46px]" viewBox="0 0 46 40"><path d="M1 2h14l3 4h27v28H1z" fill="#8f7f4a" /><path d="M8 38V24h30v14h-7v-7H15v7z" fill="#3c6a90" /></svg></TaskButton>
      <TaskButton><svg className="h-[42px] w-[42px]" viewBox="0 0 42 42"><path d="M3 10A21 21 0 0139 10H21z" fill="#8c302c" /><path d="M3 10a21 21 0 0015 32l9-16-15-5z" fill="#356b35" /><path d="M39 10a21 21 0 01-21 32l10-18-7-14z" fill="#94791f" /><circle cx="21" cy="21" r="8" fill="#2d5aa0" stroke="#888" strokeWidth="2" /></svg></TaskButton>
      <TaskButton><svg className="h-[42px] w-[42px]" viewBox="0 0 42 42"><path d="M1 1h40v40H1z" fill="#333b33" stroke="#5b6b5b" strokeWidth="2" /><path d="M8 8l20 24M28 8L8 32" stroke="#3d6b38" strokeWidth="6" /></svg></TaskButton>
      <TaskButton><svg className="h-[42px] w-[42px]" viewBox="0 0 42 42"><path d="M1 1h40v40H1z" fill="#55281d" stroke="#7a4a3a" strokeWidth="2" /><circle cx="20" cy="20" r="10" fill="none" stroke="#967060" strokeWidth="5" /></svg></TaskButton>
      <TaskButton><svg className="h-[44px] w-[44px]" viewBox="0 0 44 44"><rect width="44" height="44" rx="8" fill="#24507f" /><path d="M8 12l6 20 8-12 8 12 6-20" fill="none" stroke="#5a80a8" strokeWidth="4" /></svg></TaskButton>
      <TaskButton className="w-[78px]"><svg className="h-[42px] w-[42px]" viewBox="0 0 42 42" fill="none" strokeWidth="7"><path d="M6 14h22v22H6z" stroke="#94742a" /><path d="M14 6h22v22H14z" stroke="#356a88" /></svg></TaskButton>
      <TaskButton className="ml-[6px] w-[84px]"><svg className="h-[44px] w-[40px]" viewBox="0 0 40 44"><circle cx="12" cy="10" r="9" fill="#6b6b68" /><path d="M14 12h24v18H14z" fill="#807a62" /><path d="M8 20h12v24H8z" fill="#333" /></svg></TaskButton>
      <span className="ml-auto h-full w-[20px] border-l border-[#555]" />
    </div>
  )
}

function ImeBar() {
  return (
    <div className="absolute top-[817px] right-[60px] flex h-[31px] w-[208px] items-center border border-r-0 border-[#b4b7bb] bg-[#f8fbfe] pl-[3px] text-[#3480d4]">
      <AtguiguMark className="h-[25px] w-[26px]" />
      <span className="ml-[7px] text-[20px] leading-[24px] font-bold">中</span>
      <svg className="ml-[10px] h-[18px] w-[18px]" viewBox="0 0 18 18" fill="currentColor"><path d="M12 0c7 5 7 13 0 16-4 2-9 1-12-3 5 1 9 0 11-3 2-3 2-6 1-10z" /></svg>
      <Icon className="ml-[12px] h-[20px] w-[16px]" box="0 0 16 20"><circle cx="5" cy="5" r="3" /><path d="M13 12q1 4-3 6" strokeWidth={3} /></Icon>
      <Icon className="ml-[7px] h-[18px] w-[25px]" box="0 0 25 18"><path d="M1 1h23v16H1z" /><path d="M4 5h17M4 9h17" strokeDasharray="3 1" strokeWidth={3} /><path d="M4 13h2M8 13h9M19 13h2" /></Icon>
      <svg className="ml-[10px] h-[20px] w-[16px]" viewBox="0 0 16 20" fill="#a9abad"><circle cx="8" cy="5" r="5" /><path d="M1 19c-1-12 15-12 14 0z" /></svg>
      <Wrench className="ml-[10px] h-[20px] w-[20px]" fill="currentColor" />
    </div>
  )
}

function PlayerControls() {
  return (
    <div className="absolute inset-x-0 bottom-0 font-['Liberation_Sans','Noto_Sans_CJK_SC',sans-serif] text-white">
      <div className="relative px-[12px]">
        <svg className="block h-[30px] w-full" viewBox="0 0 1896 30" preserveAspectRatio="none">
          <path
            d="M0 30V24Q8 24 16 14Q30 10 60 10T110 13T180 15T240 14T290 10T330 13T420 14T480 12T540 15Q600 12 628 9Q660 12 690 9Q710 9 726 5Q740 3 752 10Q790 14 830 15T900 12Q950 10 985 9Q1000 3 1014 2Q1024 3 1034 9Q1080 9 1100 11T1140 11T1180 15L1204 14V30z"
            fill="#7dbdd4" fillOpacity=".55"
          />
          <path d="M1204 30V14Q1220 13 1244 8V30z" fill="#bdb3ae" fillOpacity=".7" />
          <path d="M1244 30V8Q1270 12 1280 14T1420 13T1560 14T1690 12L1761 13V30z" fill="#7dbdd4" fillOpacity=".55" />
          <path d="M1761 30V13Q1790 10 1830 14T1876 15Q1886 18 1896 28V30z" fill="#888" fillOpacity=".4" />
        </svg>
        <input
          type="range"
          aria-label="播放进度"
          defaultValue={93}
          className="block h-[4px] w-full appearance-none bg-[linear-gradient(to_right,#23ade5_93%,#8f8f8f88_93%)] [&::-webkit-slider-thumb]:h-0 [&::-webkit-slider-thumb]:w-0 [&::-webkit-slider-thumb]:appearance-none"
        />
        <svg className="absolute top-[10px] right-[5px] h-[18px] w-[13px]" viewBox="0 0 13 18" fill="#fff"><path d="M5 0h2v3l6 4-6 4v7H5v-6l-5 2 5-6z" /></svg>
      </div>
      <div className="flex h-[74px] items-start pt-[21px] pr-[27px] pl-[29px]">
        <div className="flex h-[34px] w-[522px] shrink-0 items-center">
          <button aria-label="播放"><svg className="h-[23px] w-[20px]" viewBox="0 0 20 23" fill="#eee"><path d="M1 1q2-1 4 1l13 8q2 2 0 3L3 22q-2 1-2-1z" /></svg></button>
          <button aria-label="下一个" className="ml-[36px]"><svg className="h-[16px] w-[17px]" viewBox="0 0 17 16" fill="#ddd"><path d="M0 0l12 8-12 8zM13 0h3v16h-3z" /></svg></button>
          <span className="ml-[34px] text-[14px]">21:13 / 22:51</span>
        </div>
        <div className="flex h-[34px] w-[717px] shrink-0 items-center">
          <label className="flex h-[20px] w-[30px] items-center rounded-full bg-[#777]">
            <input type="checkbox" aria-label="弹幕开关" className="sr-only" />
            <span className="flex h-[18px] w-[18px] items-center justify-center rounded-full bg-white text-[11px] leading-[12px] text-[#444]">弹</span>
          </label>
          <button aria-label="弹幕设置" className="ml-[27px]">
            <svg className="h-[20px] w-[25px]" viewBox="0 0 25 20"><path d="M2 0h18q3 0 3 3v6h-8l-3 5 2 5H2q-2 0-2-2V3q0-3 2-3z" fill="#e8e8e8" /><path d="M4 6h3M9 6h9M4 11h6" stroke="#222" strokeWidth="2" /><circle cx="19" cy="14" r="4" fill="none" stroke="#e8e8e8" strokeWidth="3" strokeDasharray="3 1" /></svg>
          </button>
          <form className="ml-[27px] flex h-[34px] flex-1 overflow-hidden rounded-sm bg-[#8b8c8e]/70">
            <button type="button" aria-label="弹幕样式" className="ml-[10px] flex w-[18px] flex-col items-center justify-center text-[20px] leading-[17px] text-[#eee]">A<span className="mt-px h-[2px] w-[17px] bg-[#eee]" /></button>
            <input aria-label="弹幕" placeholder="发个友善的弹幕见证当下" className="ml-[11px] min-w-0 flex-1 text-[12px] outline-none placeholder:text-[#c4c4c4] placeholder:opacity-100" />
            <a href="#etiquette" className="flex items-center pr-[11px] text-[12px] text-[#c4c4c4]">弹幕礼仪<ChevronRight className="h-[14px] w-[14px]" /></a>
            <button type="button" className="w-[60px] bg-[#00a1d6] text-[12px]">发送</button>
          </form>
        </div>
        <div className="flex h-[34px] flex-1 items-center justify-end text-[16px] font-bold whitespace-nowrap">
          <button>1080P 高清</button>
          <button className="ml-[20px]">选集</button>
          <button className="ml-[29px] text-[15px]">1.5x</button>
          <button aria-label="音量" className="ml-[33px]"><svg className="h-[22px] w-[24px]" viewBox="0 0 24 22" fill="#eee"><path d="M0 7h5l8-6v20l-8-6H0z" /><path d="M15 6q5 5 0 10M18 3q8 8 0 16" fill="none" stroke="#eee" strokeWidth="2" /></svg></button>
          <button aria-label="设置" className="ml-[30px]"><svg className="h-[24px] w-[24px]" viewBox="0 0 24 24" fill="none" stroke="#eee"><circle cx="12" cy="12" r="7" strokeWidth="5" /><circle cx="12" cy="12" r="10" strokeWidth="3" strokeDasharray="5 5" /></svg></button>
          <button aria-label="画中画" className="ml-[30px]"><svg className="h-[22px] w-[25px]" viewBox="0 0 25 22" fill="none" stroke="#eee" strokeWidth="2"><path d="M12 18H1V1h22v10" /><path d="M15 14h9v7h-9z" fill="#eee" /></svg></button>
          <button aria-label="全屏" className="ml-[29px]"><svg className="h-[24px] w-[24px]" viewBox="0 0 24 24" fill="#eee"><path d="M8 2h8l-3 7h-3zM1 14l4-6 5 5-3 3zM23 14l-4-6-5 5 3 3zM7 22l3-6h4l3 6z" /></svg></button>
        </div>
      </div>
    </div>
  )
}

export default function App() {
  return (
    <div className="relative h-screen overflow-hidden bg-black font-['Open_Sans','Noto_Sans_CJK_SC',sans-serif]">
      <div className="mx-[60px] flex h-full flex-col overflow-hidden">
        <TitleBar />
        <Ribbon />
        <TabBar />
        <div className="flex min-h-0 flex-1 bg-[#bfc2cc]">
          <OutlinePanel />
          <Document />
          <ScrollRail />
          <TaskPane />
        </div>
        <StatusBar />
        <Taskbar />
      </div>
      <ImeBar />

      {/* Player chrome */}
      <div className="pointer-events-none absolute inset-x-0 top-0 h-[76px] bg-linear-to-b from-black/60 to-transparent" />
      <div className="pointer-events-none absolute inset-x-0 bottom-0 h-[190px] bg-[linear-gradient(to_bottom,transparent,#0000002b_37%,#00000060_54%,#000000a0_70%,#000000c0)]" />
      <h1 className="absolute top-[22px] left-[19px] font-['Liberation_Sans','Noto_Sans_CJK_SC',sans-serif] text-[16px] leading-[24px] text-white">012_尚硅谷_Linux基础篇_文件系统目录结构</h1>
      <button aria-label="反馈" className="absolute top-[22px] right-[29px]">
        <svg className="h-[19px] w-[21px]" viewBox="0 0 21 19"><path d="M3 0h15q3 0 3 3v10q0 3-3 3H4l-4 3V3q0-3 3-3z" fill="#ccc" /><path d="M7 6q0-3 4-3 3 0 3 3 0 2-3 3v2M11 12v2" fill="none" stroke="#000" strokeWidth="2" /></svg>
      </button>
      <svg className="absolute right-[38px] bottom-[112px] h-[54px] w-[55px] opacity-85" viewBox="0 0 55 54">
        <path d="M15 4l5 7M39 4l-5 7" stroke="#e4e4e4" strokeWidth="5" strokeLinecap="round" />
        <path d="M8 10h39q7 0 7 8v26q0 8-7 8H8q-7 0-7-8V18q0-8 7-8z" fill="#e0e0e0" />
        <path d="M21 23l15 8q2 1 0 2l-15 9q-2 0-2-2V25q0-2 2-2z" fill="#bbb" stroke="#777" strokeWidth="2" />
      </svg>
      <PlayerControls />
      <p className="pointer-events-none absolute right-[5px] bottom-[10px] font-['Liberation_Sans','Noto_Sans_CJK_SC',sans-serif] text-[36px] leading-[46px] whitespace-nowrap text-[#d0d0d0]/75">CSDN @蓝影铁哥</p>
    </div>
  )
}
